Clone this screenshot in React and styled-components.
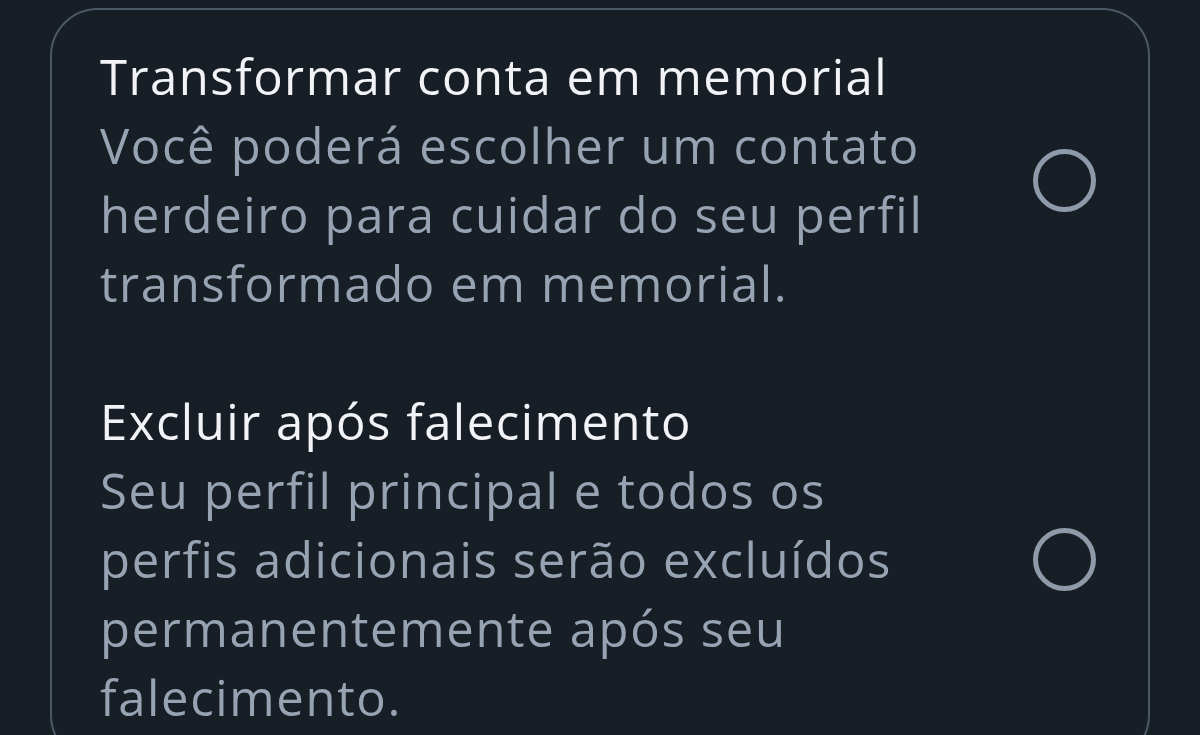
import React from 'react'
import styled, { createGlobalStyle } from 'styled-components'

const GlobalStyle = createGlobalStyle`
  html, body {
    margin: 0;
    padding: 0;
    background: #171e25;
    overflow: hidden;
  }
`

const options = [
  {
    title: 'Transformar conta em memorial',
    lines: [
      'Você poderá escolher um contato',
      'herdeiro para cuidar do seu perfil',
      'transformado em memorial.',
    ],
  },
  {
    title: 'Excluir após falecimento',
    lines: [
      'Seu perfil principal e todos os',
      'perfis adicionais serão excluídos',
      'permanentemente após seu',
      'falecimento.',
    ],
  },
]

const App = () => {
  return (
    <Page>
      <GlobalStyle />
      <Card>
        {options.map((opt) => (
          <Option key={opt.title}>
            <Texts>
              <Title>{opt.title}</Title>
              {opt.lines.map((l) => (
                <Desc key={l}>{l}</Desc>
              ))}
            </Texts>
            <Radio />
          </Option>
        ))}
      </Card>
    </Page>
  )
}

export default App

const Page = styled.div`
  height: 735px;
  padding: 8px 50px 0 50px;
  box-sizing: border-box;
  font-family: "Open Sans", "Noto Sans", sans-serif;
`

const Card = styled.div`
  border: 2.5px solid #4d5866;
  border-radius: 48px;
  padding: 32px 52px 29px 48px;
  display: flex;
  flex-direction: column;
  gap: 69px;
`

const Option = styled.div`
  display: flex;
  align-items: center;
  justify-content: space-between;
`

const Texts = styled.div`
  display: flex;
  flex-direction: column;
`

const Title = styled.div`
  font-size: 49px;
  line-height: 69px;
  letter-spacing: 1.5px;
  color: #f1f3f6;
  white-space: nowrap;
`

const Desc = styled.div`
  font-size: 49px;
  line-height: 69px;
  letter-spacing: 1.65px;
  color: #97a3b3;
  white-space: nowrap;
`

const Radio = styled.div`
  width: 63px;
  height: 63px;
  box-sizing: border-box;
  border-radius: 50%;
  border: 5px solid #8e9aaa;
  flex-shrink: 0;
`
